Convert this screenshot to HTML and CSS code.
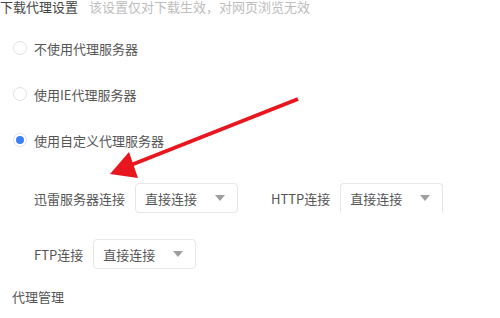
FILE: index.html
```html
<!DOCTYPE html>
<html lang="zh-CN">
<head>
<meta charset="utf-8">
<link rel="stylesheet" href="styles.css">
</head>
<body>
<div class="page">
  <div class="header">
    <span class="title">下载代理设置</span>
    <span class="hint">该设置仅对下载生效，对网页浏览无效</span>
  </div>
  <div class="radios">
    <div class="radio-row"><span class="radio"></span><span class="label">不使用代理服务器</span></div>
    <div class="radio-row"><span class="radio"></span><span class="label">使用IE代理服务器</span></div>
    <div class="radio-row"><span class="radio checked"></span><span class="label">使用自定义代理服务器</span></div>
  </div>
  <div class="field-row first">
    <div class="field">
      <span class="label">迅雷服务器连接</span>
      <div class="select"><span>直接连接</span><span class="caret"></span></div>
    </div>
    <div class="field http">
      <span class="label">HTTP连接</span>
      <div class="select"><span>直接连接</span><span class="caret"></span></div>
    </div>
  </div>
  <div class="field-row second">
    <div class="field">
      <span class="label">FTP连接</span>
      <div class="select"><span>直接连接</span><span class="caret"></span></div>
    </div>
  </div>
  <div class="section">代理管理</div>
</div>
<svg class="annot" width="500" height="318" viewBox="0 0 500 318">
  <line x1="298" y1="99" x2="131" y2="165" stroke="#e8161e" stroke-width="4"/>
  <polygon points="110,174 129,152 138,178" fill="#e8161e"/>
</svg>
</body>
</html>
```
FILE: styles.css
```css
html, body {
  margin: 0;
  padding: 0;
  background: #ffffff;
}
body {
  font-family: "Noto Sans CJK SC", "Noto Sans", sans-serif;
  font-size: 13px;
  color: #555555;
  width: 500px;
  height: 318px;
  overflow: hidden;
  position: relative;
}
.page {
  display: flex;
  flex-direction: column;
}
.header {
  display: flex;
  align-items: center;
  height: 14px;
  line-height: 14px;
  gap: 11px;
}
.title {
  color: #444444;
}
.hint {
  color: #bdbdbd;
}
.radios {
  display: flex;
  flex-direction: column;
  gap: 26px;
  margin-top: 24px;
  padding-left: 13px;
}
.radio-row {
  display: flex;
  align-items: center;
  height: 20px;
  gap: 7px;
}
.radio {
  box-sizing: border-box;
  width: 14px;
  height: 14px;
  border-radius: 50%;
  border: 1px solid #e2e2e2;
  display: flex;
  align-items: center;
  justify-content: center;
}
.radio.checked::after {
  content: "";
  width: 8px;
  height: 8px;
  border-radius: 50%;
  background: #3b7ff5;
}
.label {
  color: #555555;
  white-space: nowrap;
}
.field-row {
  display: flex;
  align-items: center;
  padding-left: 34px;
  gap: 33px;
}
.field-row.first {
  margin-top: 33px;
}
.field-row.second {
  margin-top: 26px;
}
.field {
  display: flex;
  align-items: center;
  gap: 10px;
}
.select {
  box-sizing: border-box;
  width: 103px;
  height: 30px;
  border: 1px solid #e6e6e6;
  border-radius: 4px;
  display: flex;
  align-items: center;
  justify-content: space-between;
  padding: 0 12px 0 9px;
  color: #555555;
}
.field.http .select {
  border-bottom-color: transparent;
  border-radius: 4px 4px 0 0;
}
.caret {
  width: 0;
  height: 0;
  border-left: 5px solid transparent;
  border-right: 5px solid transparent;
  border-top: 6px solid #9e9e9e;
}
.section {
  margin-top: 18px;
  padding-left: 12px;
  height: 20px;
  line-height: 20px;
  color: #555555;
}
.annot {
  position: absolute;
  left: 0;
  top: 0;
  pointer-events: none;
}
```
